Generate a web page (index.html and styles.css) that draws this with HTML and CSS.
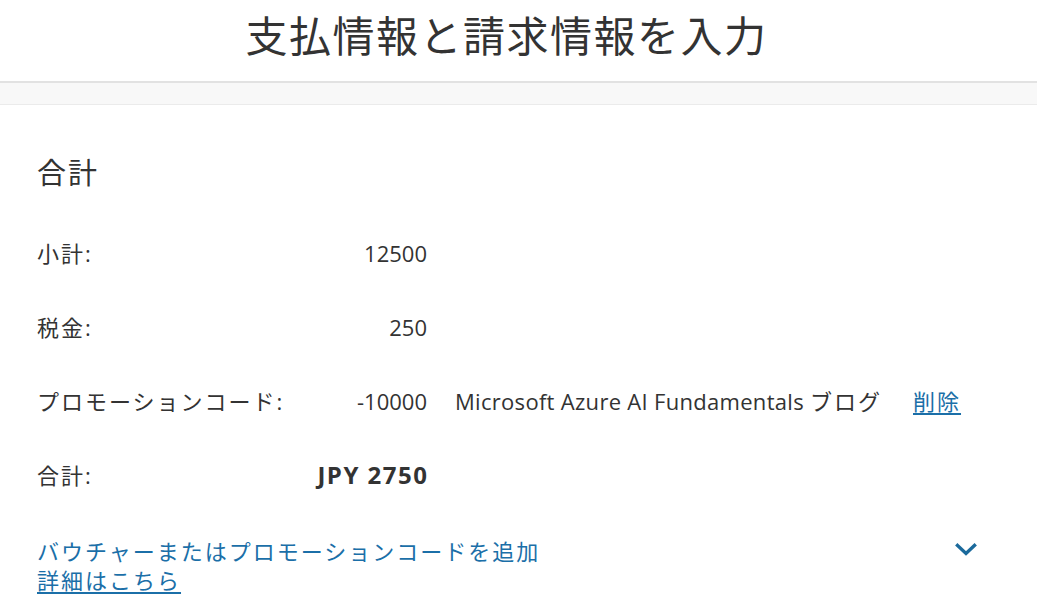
FILE: index.html
```html
<!DOCTYPE html>
<html lang="ja">
<head>
<meta charset="utf-8">
<title>支払情報と請求情報を入力</title>
<link rel="stylesheet" href="styles.css">
</head>
<body>
<header class="page-header">
  <h1 class="page-title">支払情報と請求情報を入力</h1>
</header>
<div class="band"></div>
<main class="summary">
  <h2 class="summary-title">合計</h2>
  <div class="rows">
    <div class="row">
      <span class="label">小計:</span>
      <span class="value">12500</span>
    </div>
    <div class="row">
      <span class="label">税金:</span>
      <span class="value">250</span>
    </div>
    <div class="row">
      <span class="label">プロモーションコード:</span>
      <span class="value">-10000</span>
      <span class="desc">Microsoft Azure AI Fundamentals <span class="jp">ブログ</span></span>
      <a class="link remove jp" href="#">削除</a>
    </div>
    <div class="row">
      <span class="label">合計:</span>
      <span class="value total">JPY 2750</span>
    </div>
  </div>
  <div class="voucher">
    <div class="voucher-text jp">
      <span class="voucher-title">バウチャーまたはプロモーションコードを追加</span>
      <a class="link details" href="#">詳細はこちら</a>
    </div>
    <svg class="chevron" width="22" height="14" viewBox="0 0 22 14" aria-hidden="true">
      <path d="M2.5 2.5 L11 10.5 L19.5 2.5" fill="none" stroke="#1b6a9c" stroke-width="3.4" stroke-linecap="square"/>
    </svg>
  </div>
</main>
</body>
</html>
```

FILE: styles.css
```css
* { box-sizing: border-box; }

body {
  margin: 0;
  background: #ffffff;
  color: #333333;
  font-family: "Open Sans", "Noto Sans CJK JP", sans-serif;
}

.jp { letter-spacing: 2px; }

.page-header {
  height: 83px;
  border-bottom: 2px solid #e2e2e2;
  display: flex;
  justify-content: center;
  align-items: flex-start;
}

.page-title {
  margin: 8px 24px 0 0;
  font-size: 42px;
  font-weight: 400;
  line-height: 56px;
  letter-spacing: 1.5px;
  color: #333333;
}

.band {
  height: 22px;
  background: #f8f8f8;
  border-bottom: 1px solid #ebebeb;
}

.summary {
  padding: 48px 37px 0 37px;
}

.summary-title {
  margin: 0;
  font-size: 29px;
  font-weight: 400;
  line-height: 40px;
  letter-spacing: 2px;
  color: #333333;
}

.rows {
  margin-top: 23px;
  display: flex;
  flex-direction: column;
}

.row {
  height: 74px;
  display: grid;
  grid-template-columns: 263px 127px auto auto;
  align-items: center;
  justify-content: start;
  font-size: 22px;
  line-height: 30px;
}

.label {
  white-space: nowrap;
  letter-spacing: 2px;
}

.value {
  text-align: right;
  white-space: nowrap;
}

.value.total {
  font-weight: 700;
  font-size: 24px;
  letter-spacing: 1.5px;
  margin-right: -1.5px;
}

.desc {
  margin-left: 28px;
  white-space: nowrap;
  letter-spacing: 0.3px;
}

.link {
  color: #1b6fa8;
  text-decoration: underline;
  text-underline-offset: 3px;
}

.remove { margin-left: 31px; }

.voucher {
  margin-top: 25px;
  display: flex;
  justify-content: space-between;
  align-items: flex-start;
  width: 940px;
}

.voucher-text {
  display: flex;
  flex-direction: column;
  align-items: flex-start;
  font-size: 22px;
  line-height: 29px;
  color: #1b6fa8;
}

.chevron {
  margin-top: 6px;
}
```
